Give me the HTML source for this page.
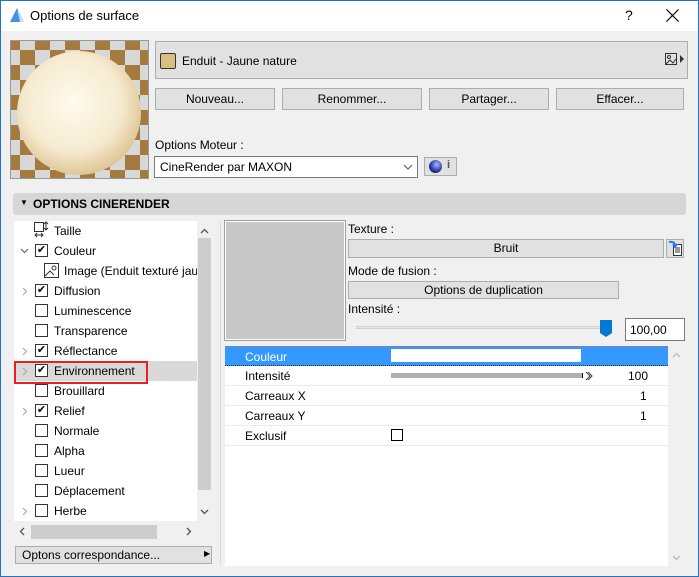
<!DOCTYPE html>
<html><head><meta charset="utf-8"><style>
*{box-sizing:border-box;margin:0;padding:0}
body{width:699px;height:577px;overflow:hidden;background:#f0f0f0;font-family:"Liberation Sans",sans-serif;font-size:12px;color:#000;position:relative}
.a{position:absolute}
.btn{position:absolute;background:#e1e1e1;border:1px solid #adadad;text-align:center;font-size:12px}
.tl{position:absolute;left:54px;font-size:12px}
.cb{position:absolute;left:35px;width:13px;height:13px;border:1px solid #333;background:#fff;font-size:11px;line-height:11px;text-align:center}
.ar{position:absolute;left:21px;top:0}
.row{position:absolute;left:225px;width:443px;height:20px;border-bottom:1px solid #ececec}
.row span{position:absolute;top:3px}
</style></head><body>
<div class="a" style="left:0;top:0;width:699px;height:577px;border:1px solid #1e73c6"></div>
<div class="a" style="left:1px;top:1px;width:697px;height:30px;background:#fff"></div>
<svg class="a" style="left:9px;top:7px" width="16" height="16"><path d="M1 15 L8 1 L15 15 Z" fill="#4a90e2"/><path d="M8 1 L11 15 L15 15Z" fill="#bfe0ff"/></svg>
<div class="a" style="left:30px;top:8px;font-size:13px">Options de surface</div>
<div class="a" style="left:625px;top:7px;font-size:14px">?</div>
<svg class="a" style="left:666px;top:9px" width="13" height="13"><path d="M0.5 0.5 L12.5 12.5 M12.5 0.5 L0.5 12.5" stroke="#000" stroke-width="1.2"/></svg>

<svg class="a" style="left:10px;top:40px" width="139" height="139">
<defs><pattern id="c" width="30" height="30" patternUnits="userSpaceOnUse" x="-5" y="-5"><rect width="30" height="30" fill="#d8d8d8"/><rect width="15" height="15" fill="#a57a3e"/><rect x="15" y="15" width="15" height="15" fill="#a57a3e"/></pattern>
<radialGradient id="s" cx="0.45" cy="0.42" r="0.6"><stop offset="0" stop-color="#fffbef"/><stop offset="0.65" stop-color="#f6ead0"/><stop offset="1" stop-color="#dcc492"/></radialGradient></defs>
<rect width="139" height="139" fill="url(#c)"/>
<rect x="0.5" y="0.5" width="138" height="138" fill="none" stroke="#999"/>
<circle cx="69" cy="73" r="62" fill="url(#s)"/>
</svg>

<div class="a" style="left:155px;top:41px;width:533px;height:38px;background:#e1e1e1;border:1px solid #adadad"></div>
<div class="a" style="left:160px;top:53px;width:16px;height:16px;background:#d9c080;border:1px solid #333;border-radius:2px"></div>
<div class="a" style="left:182px;top:54px">Enduit - Jaune nature</div>
<svg class="a" style="left:665px;top:53px" width="22" height="14"><rect x="0.5" y="0.5" width="11" height="11" fill="none" stroke="#333"/><circle cx="4" cy="4" r="1.5" fill="none" stroke="#333"/><path d="M1 11 L5 7 L8 10 L11 6" fill="none" stroke="#333"/><path d="M15 2 L19 6 L15 10Z" fill="#333"/></svg>

<div class="btn" style="left:155px;top:88px;width:120px;height:22px;line-height:20px">Nouveau...</div>
<div class="btn" style="left:282px;top:88px;width:140px;height:22px;line-height:20px">Renommer...</div>
<div class="btn" style="left:429px;top:88px;width:120px;height:22px;line-height:20px">Partager...</div>
<div class="btn" style="left:556px;top:88px;width:128px;height:22px;line-height:20px">Effacer...</div>

<div class="a" style="left:155px;top:138px">Options Moteur :</div>
<div class="a" style="left:154px;top:156px;width:264px;height:22px;background:#fff;border:1px solid #7a7a7a"></div>
<div class="a" style="left:160px;top:160px">CineRender par MAXON</div>
<svg class="a" style="left:403px;top:163px" width="10" height="8"><path d="M1 2 L5 6 L9 2" fill="none" stroke="#555"/></svg>
<div class="a" style="left:424px;top:157px;width:33px;height:19px;background:#e1e1e1;border:1px solid #adadad"></div>
<div class="a" style="left:429px;top:160px;width:13px;height:13px;border-radius:50%;background:radial-gradient(circle at 60% 35%,#aab8ff,#2130a0 60%,#111)"></div>
<div class="a" style="left:447px;top:159px;font-size:11px;font-weight:bold;color:#555">i</div>

<div class="a" style="left:13px;top:193px;width:673px;height:22px;background:#d6d6d6;border-radius:3px"></div>
<div class="a" style="left:20px;top:198px;font-size:8px">▼</div>
<div class="a" style="left:33px;top:197px;font-weight:bold;font-size:12px">OPTIONS CINERENDER</div>

<div class="a" style="left:14px;top:221px;width:183px;height:300px;background:#fff"></div>
<div class="a" style="left:197px;top:221px;width:15px;height:300px;background:#f0f0f0"></div>
<div class="a" style="left:198px;top:238px;width:13px;height:252px;background:#cdcdcd"></div>
<svg class="a" style="left:200px;top:228px" width="9" height="6"><path d="M1 5 L4.5 1.5 L8 5" fill="none" stroke="#555" stroke-width="1.3"/></svg>
<svg class="a" style="left:200px;top:509px" width="9" height="6"><path d="M1 1 L4.5 4.5 L8 1" fill="none" stroke="#555" stroke-width="1.3"/></svg>
<div class="a" style="left:14px;top:521px;width:198px;height:20px;background:#f0f0f0"></div>
<div class="a" style="left:31px;top:525px;width:126px;height:14px;background:#cdcdcd"></div>
<svg class="a" style="left:19px;top:527px" width="6" height="9"><path d="M5 1 L1.5 4.5 L5 8" fill="none" stroke="#555" stroke-width="1.3"/></svg>
<svg class="a" style="left:186px;top:527px" width="6" height="9"><path d="M1 1 L4.5 4.5 L1 8" fill="none" stroke="#555" stroke-width="1.3"/></svg>
<div class="a" style="left:16px;top:361px;width:181px;height:20px;background:#d9d9d9"></div>

<svg class="a" style="left:33px;top:221px" width="16" height="16"><rect x="1.5" y="1.5" width="9" height="9" fill="none" stroke="#333"/><path d="M13 1 V9 M11 3 L13 1 L15 3 M11 7 L13 9 L15 7 M2 14 H10 M4 12 L2 14 L4 16 M8 12 L10 14 L8 16" stroke="#333" fill="none"/></svg>
<div class="tl" style="top:224px">Taille</div>
<svg class="a" style="left:20px;top:248px" width="9" height="6"><path d="M1 1 L4.5 4.5 L8 1" fill="none" stroke="#666" stroke-width="1.2"/></svg>
<div class="cb" style="top:244px">✔</div><div class="tl" style="top:244px">Couleur</div>
<svg class="a" style="left:44px;top:263px" width="16" height="16"><rect x="0.5" y="0.5" width="14" height="14" fill="none" stroke="#333"/><circle cx="10" cy="5" r="2" fill="none" stroke="#333"/><path d="M1 13 L6 8 L10 12" fill="none" stroke="#333"/></svg>
<div class="a" style="left:64px;top:264px;width:133px;overflow:hidden;white-space:nowrap">Image (Enduit texturé jaune)</div>
<svg class="a" style="left:22px;top:287px" width="6" height="9"><path d="M1 1 L4.5 4.5 L1 8" fill="none" stroke="#aaa" stroke-width="1.2"/></svg>
<div class="cb" style="top:284px">✔</div><div class="tl" style="top:284px">Diffusion</div>
<div class="cb" style="top:304px"></div><div class="tl" style="top:304px">Luminescence</div>
<div class="cb" style="top:324px"></div><div class="tl" style="top:324px">Transparence</div>
<svg class="a" style="left:22px;top:347px" width="6" height="9"><path d="M1 1 L4.5 4.5 L1 8" fill="none" stroke="#aaa" stroke-width="1.2"/></svg>
<div class="cb" style="top:344px">✔</div><div class="tl" style="top:344px">Réflectance</div>
<svg class="a" style="left:22px;top:367px" width="6" height="9"><path d="M1 1 L4.5 4.5 L1 8" fill="none" stroke="#aaa" stroke-width="1.2"/></svg>
<div class="cb" style="top:364px">✔</div><div class="tl" style="top:364px">Environnement</div>
<div class="a" style="left:14px;top:361px;width:134px;height:23px;border:2px solid #e82020"></div>
<div class="cb" style="top:384px"></div><div class="tl" style="top:384px">Brouillard</div>
<svg class="a" style="left:22px;top:407px" width="6" height="9"><path d="M1 1 L4.5 4.5 L1 8" fill="none" stroke="#aaa" stroke-width="1.2"/></svg>
<div class="cb" style="top:404px">✔</div><div class="tl" style="top:404px">Relief</div>
<div class="cb" style="top:424px"></div><div class="tl" style="top:424px">Normale</div>
<div class="cb" style="top:444px"></div><div class="tl" style="top:444px">Alpha</div>
<div class="cb" style="top:464px"></div><div class="tl" style="top:464px">Lueur</div>
<div class="cb" style="top:484px"></div><div class="tl" style="top:484px">Déplacement</div>
<svg class="a" style="left:22px;top:507px" width="6" height="9"><path d="M1 1 L4.5 4.5 L1 8" fill="none" stroke="#aaa" stroke-width="1.2"/></svg>
<div class="cb" style="top:504px"></div><div class="tl" style="top:504px">Herbe</div>

<div class="btn" style="left:15px;top:546px;width:197px;height:18px;text-align:left;padding-left:6px;line-height:16px">Optons correspondance...</div>
<div class="a" style="left:204px;top:549px;font-size:8px">▶</div>

<div class="a" style="left:220px;top:221px;width:1px;height:345px;background:#dcdcdc"></div>
<div class="a" style="left:225px;top:221px;width:120px;height:119px;background:#c8c8c8;border:1px solid #fff;outline:1px solid #a0a0a0"></div>
<div class="a" style="left:348px;top:222px">Texture :</div>
<div class="btn" style="left:348px;top:239px;width:316px;height:19px;line-height:17px">Bruit</div>
<div class="a" style="left:666px;top:239px;width:18px;height:19px;background:#e1e1e1;border:1px solid #adadad"></div>
<svg class="a" style="left:667px;top:240px" width="16" height="17"><rect x="6.5" y="4.5" width="8" height="11" fill="#fff" stroke="#333"/><path d="M8 8H13M8 10H13M8 12H13" stroke="#333"/><path d="M2 2 Q8 1 8 6 M6 4 L8 7 L10 4" stroke="#2a7ae2" stroke-width="2" fill="none"/></svg>
<div class="a" style="left:348px;top:264px">Mode de fusion :</div>
<div class="btn" style="left:348px;top:281px;width:271px;height:18px;line-height:16px">Options de duplication</div>
<div class="a" style="left:348px;top:302px">Intensité :</div>
<div class="a" style="left:356px;top:326px;width:254px;height:3px;background:#e6e6e6;border:1px solid #d0d0d0"></div>
<svg class="a" style="left:600px;top:320px" width="13" height="18"><path d="M0 0H12V13L6 17L0 13Z" fill="#0078d7"/></svg>
<div class="a" style="left:625px;top:318px;width:60px;height:23px;background:#fff;border:1px solid #7a7a7a;padding:4px 0 0 4px">100,00</div>

<div class="a" style="left:225px;top:346px;width:443px;height:220px;background:#fff"></div>
<div class="a" style="left:668px;top:346px;width:17px;height:220px;background:#f0f0f0"></div>
<svg class="a" style="left:672px;top:352px" width="9" height="6"><path d="M1 5 L4.5 1.5 L8 5" fill="none" stroke="#bbb" stroke-width="1.3"/></svg>
<svg class="a" style="left:672px;top:555px" width="9" height="6"><path d="M1 1 L4.5 4.5 L8 1" fill="none" stroke="#bbb" stroke-width="1.3"/></svg>
<div class="row" style="top:346px;background:#3399ff;border-top:1px dotted #c66;border-bottom:1px dotted #333"><span style="left:20px;color:#fff">Couleur</span><div class="a" style="left:166px;top:2px;width:190px;height:13px;background:#fff"></div></div>
<div class="row" style="top:366px"><span style="left:20px">Intensité</span><div class="a" style="left:166px;top:7px;width:192px;height:5px;background:#b0b0b0;border-right:1px solid #000"></div><svg class="a" style="left:360px;top:5px" width="8" height="10"><path d="M1 1 L5 5 L1 9 M3 1 L7 5 L3 9" fill="none" stroke="#444"/></svg><span style="left:403px">100</span></div>
<div class="row" style="top:386px"><span style="left:415px;"></span><span style="left:20px">Carreaux X</span><span style="left:415px">1</span></div>
<div class="row" style="top:406px"><span style="left:20px">Carreaux Y</span><span style="left:415px">1</span></div>
<div class="row" style="top:426px"><span style="left:20px">Exclusif</span><div class="a" style="left:166px;top:3px;width:12px;height:12px;border:1px solid #000"></div></div>
</body></html>
